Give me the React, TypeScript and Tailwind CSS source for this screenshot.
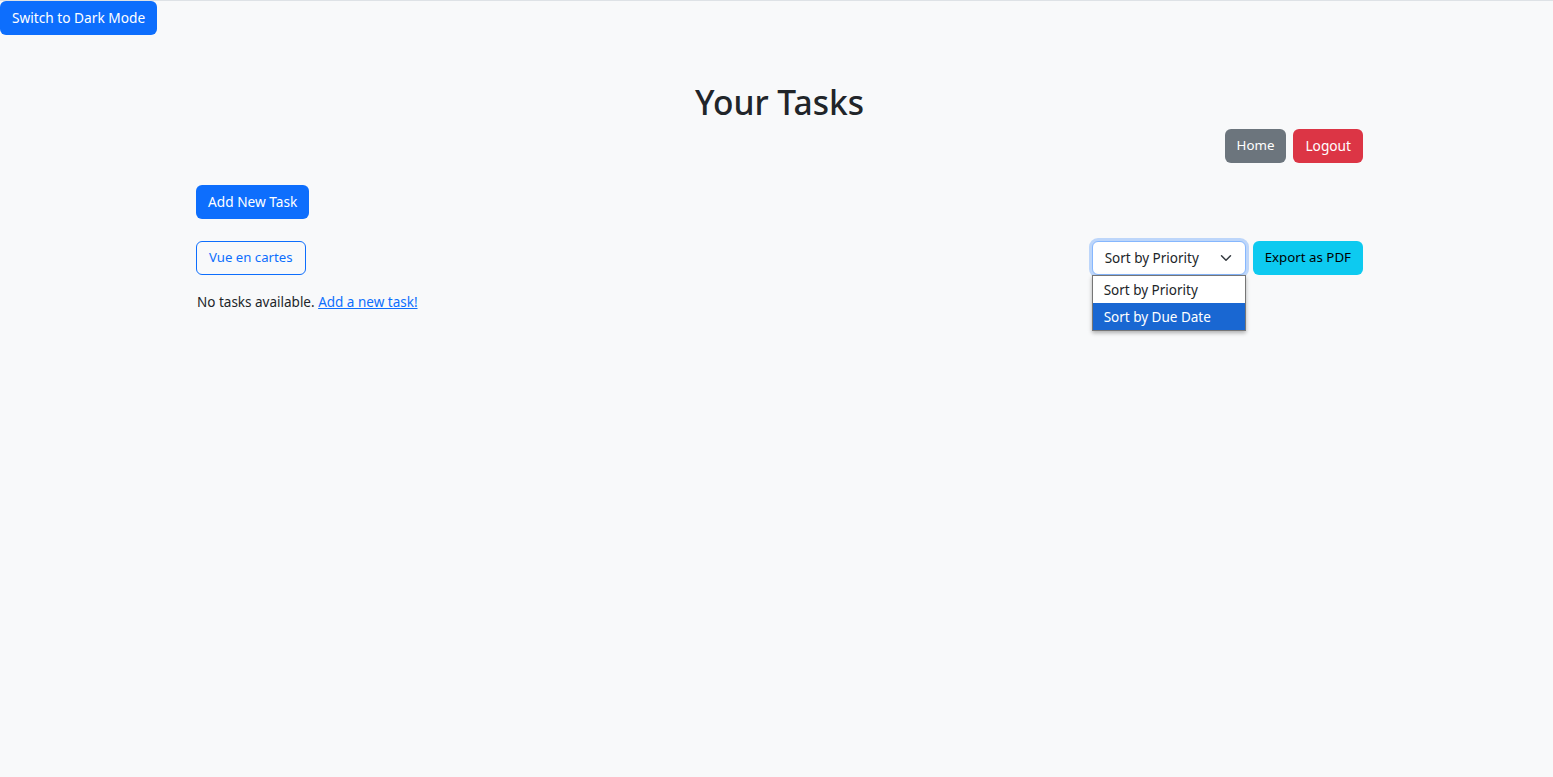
const font = "font-['Noto_Sans','Liberation_Sans',sans-serif]";

function Chevron() {
  return (
    <svg width="16" height="12" viewBox="0 0 16 16" fill="none" className="shrink-0">
      <path d="m2 5 6 6 6-6" stroke="#343a40" strokeWidth="2" strokeLinecap="round" strokeLinejoin="round" />
    </svg>
  );
}

export default function App() {
  return (
    <div className={`min-h-screen border-t border-[#dee2e6] bg-[#f8f9fa] text-[#212529] ${font}`}>
      <button className="flex h-[34px] items-center rounded-md bg-[#0d6efd] px-3 text-[13.7px] text-white">
        Switch to Dark Mode
      </button>

      <div className="ml-[196px] w-[1167px] pt-[43px]">
        <h1 className="h-[48px] text-center text-[33.5px] font-medium leading-[48px]">Your Tasks</h1>

        <div className="mt-[3px] flex justify-end gap-[7px]">
          <button className="h-[34px] rounded-md bg-[#6c757d] px-3 text-[13.3px] text-white">Home</button>
          <button className="h-[34px] rounded-md bg-[#dc3545] px-3 text-[13.7px] text-white">Logout</button>
        </div>

        <div className="mt-[22px]">
          <button className="h-[34px] rounded-md bg-[#0d6efd] px-3 text-[13.7px] text-white">Add New Task</button>
        </div>

        <div className="mt-[22px] flex items-center justify-between">
          <button className="h-[34px] rounded-md border border-[#0d6efd] px-3 text-[13.2px] text-[#0d6efd]">
            Vue en cartes
          </button>
          <div className="flex gap-[7px]">
            <div className="relative">
              <div className="flex h-[34px] w-[154px] items-center justify-between rounded-md border border-[#86b7fe] bg-white pl-3 pr-[11px] text-[13.5px] shadow-[0_0_0_3px_rgba(13,110,253,0.25)]">
                <span>Sort by Priority</span>
                <Chevron />
              </div>
              <ul className="absolute left-0 top-[34px] z-10 w-[154px] border border-[#767676] bg-white text-[13.5px] shadow-[0_2px_4px_rgba(0,0,0,0.3)]">
                <li className="flex h-[27px] items-center px-[11px] pt-[1px]">Sort by Priority</li>
                <li className="flex h-[27px] items-center bg-[#1967d2] px-[11px] pt-[1px] text-white">Sort by Due Date</li>
              </ul>
            </div>
            <button className="h-[34px] rounded-md bg-[#0dcaf0] px-3 text-[13.3px] text-black">Export as PDF</button>
          </div>
        </div>

        <p className="mt-[17px] pl-[1px] text-[13.5px] leading-[21px]">
          No tasks available.{" "}
          <a href="#" className="text-[#0d6efd] underline">
            Add a new task!
          </a>
        </p>
      </div>
    </div>
  );
}
